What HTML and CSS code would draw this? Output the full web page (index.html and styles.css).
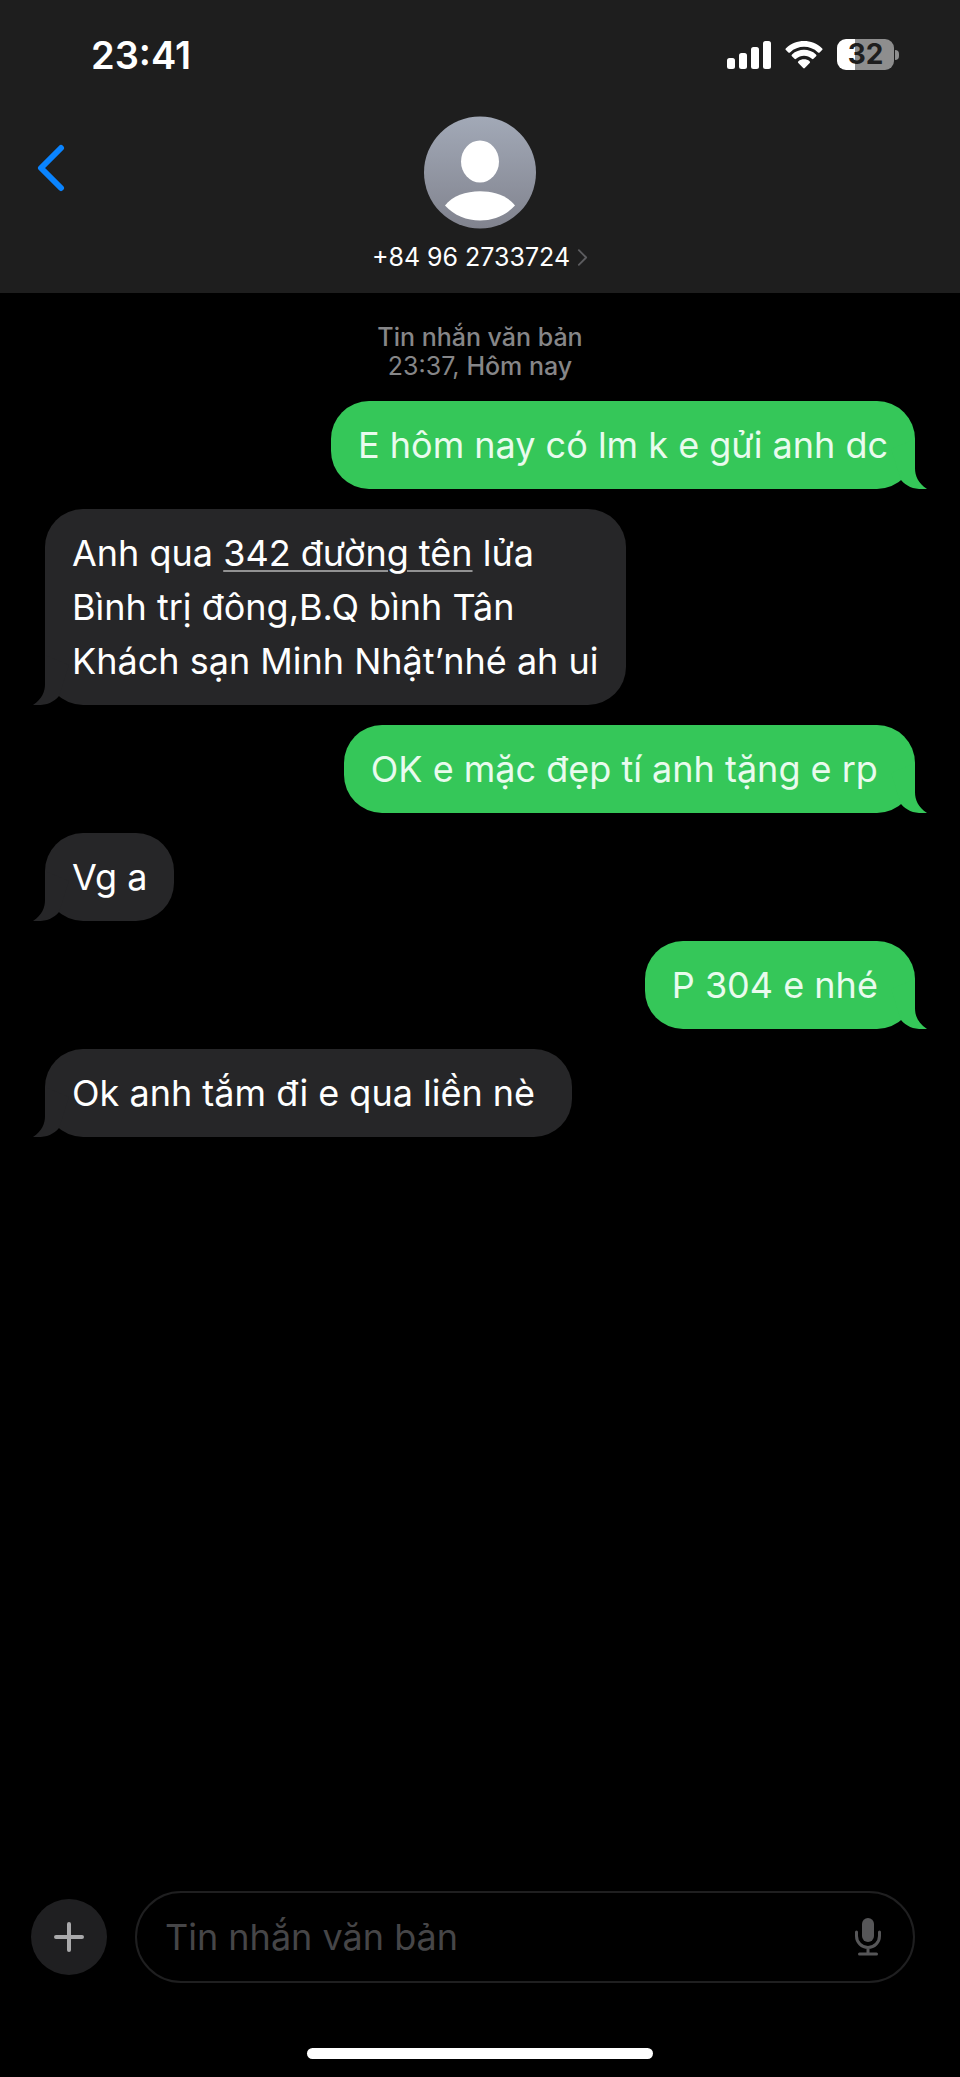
FILE: index.html
```html
<!DOCTYPE html>
<html lang="vi">
<head>
<meta charset="utf-8">
<meta name="viewport" content="width=device-width, initial-scale=1">
<title>+84 96 2733724</title>
<link rel="stylesheet" href="styles.css">
</head>
<body>
<header class="header">
  <div class="status">
    <time class="clock">23:41</time>
    <div class="indicators">
      <svg class="signal" viewBox="0 0 44 28" aria-hidden="true">
        <rect x="0" y="17" width="8" height="11" rx="2.5"/>
        <rect x="12" y="12" width="8" height="16" rx="2.5"/>
        <rect x="24" y="6" width="8" height="22" rx="2.5"/>
        <rect x="36" y="0" width="8" height="28" rx="2.5"/>
      </svg>
      <svg class="wifi" viewBox="0 0 38 28" aria-hidden="true">
        <path d="M1 7.2C11-2.3 27-2.3 37 7.2Q38 8.1 37.1 9L34.6 11.4Q33.8 12.1 33 11.4C25 4 13 4 5 11.4Q4.200 12.100 3.400 11.400L.9 9Q0 8.100 1 7.200Z"/>
        <path d="M7 13.500C13.800 7.300 24.200 7.300 31 13.500Q32 14.400 31.100 15.300L28.500 17.800Q27.700 18.500 26.900 17.800C22.300 13.800 15.700 13.800 11.100 17.800Q10.300 18.500 9.500 17.800L6.900 15.300Q6 14.400 7 13.500Z"/>
        <path d="M13.400 20.200C16.600 17.600 21.400 17.600 24.600 20.200Q25.600 21.100 24.700 22L19.800 27.100Q19 27.800 18.200 27.100L13.300 22Q12.400 21.100 13.400 20.200Z"/>
      </svg>
      <div class="battery"><span class="battery-level">32</span></div>
    </div>
  </div>
  <div class="contact-bar">
    <button class="back" type="button" aria-label="Quay lại">
      <svg viewBox="0 0 28 48" aria-hidden="true"><path d="M24 4 4 24 24 44"/></svg>
    </button>
    <button class="contact" type="button">
      <svg class="avatar" viewBox="0 0 112 112" aria-hidden="true">
        <defs>
          <linearGradient id="avatar-fill" x1="0" y1="0" x2="0" y2="1">
            <stop offset="0" stop-color="#a2a9b7"/>
            <stop offset="1" stop-color="#81838e"/>
          </linearGradient>
        </defs>
        <circle cx="56" cy="56" r="56" fill="url(#avatar-fill)"/>
        <ellipse cx="56" cy="45" rx="19" ry="21" fill="#fff"/>
        <path d="M21 89C35 70 77 70 91 89C73 109 39 109 21 89Z" fill="#fff"/>
      </svg>
      <span class="number">+84 96 2733724
        <svg class="chevron" viewBox="0 0 12 20" aria-hidden="true"><path d="m2 2 8 8-8 8"/></svg>
      </span>
    </button>
  </div>
</header>

<main class="thread">
  <p class="stamp"><strong>Tin nhắn văn bản</strong><br>23:37, <strong>Hôm nay</strong></p>
  <p class="bubble sent">E hôm nay có lm k e gửi anh dc</p>
  <p class="bubble received">Anh qua <a class="address" href="#">342 đường tên</a> lửa<br>Bình trị đông,B.Q bình Tân<br>Khách sạn Minh Nhật’nhé ah ui</p>
  <p class="bubble sent">OK e mặc đẹp tí anh tặng e rp&nbsp;</p>
  <p class="bubble received">Vg a</p>
  <p class="bubble sent">P 304 e nhé&nbsp;</p>
  <p class="bubble received">Ok anh tắm đi e qua liền nè&nbsp;</p>
</main>

<footer class="footer">
  <form class="composer">
    <button class="add" type="button" aria-label="Thêm">
      <svg viewBox="0 0 30 30" aria-hidden="true"><path d="M15 2v26M2 15h26"/></svg>
    </button>
    <div class="field">
      <input class="entry" type="text" placeholder="Tin nhắn văn bản" aria-label="Tin nhắn văn bản">
      <button class="dictate" type="button" aria-label="Đọc chính tả">
        <svg viewBox="0 0 26 38" aria-hidden="true">
          <rect class="mic-head" x="7" y="0" width="12" height="24" rx="6"/>
          <path d="M1.500 14v4a11.500 11.500 0 0 0 23 0v-4M13 30v6M4.500 36h17"/>
        </svg>
      </button>
    </div>
  </form>
  <div class="home-indicator"></div>
</footer>
</body>
</html>
```
FILE: styles.css
```css
* {
  box-sizing: border-box;
}

body {
  margin: 0;
  min-height: 100vh;
  display: flex;
  flex-direction: column;
  background: #000;
  color: #fff;
  font-family: Inter, "Noto Sans", sans-serif;
  font-size: 36px;
}

button {
  margin: 0;
  padding: 0;
  border: 0;
  background: none;
  color: inherit;
  font: inherit;
}

svg {
  display: block;
}

.header {
  background: #1e1e1e;
  padding-bottom: 20px;
}

.status {
  display: flex;
  justify-content: space-between;
  align-items: center;
  height: 109px;
  padding: 0 61px 0 91px;
}

.clock {
  font-size: 38px;
  font-weight: 600;
}

.indicators {
  display: flex;
  align-items: center;
  gap: 14px;
  fill: #fff;
}

.signal {
  width: 44px;
  height: 28px;
}

.wifi {
  width: 38px;
  height: 28px;
}

.battery {
  display: flex;
  align-items: center;
  gap: 1px;
}

.battery::after {
  content: "";
  width: 4px;
  height: 10px;
  border-radius: 0 5px 5px 0;
  background: #8e8e8e;
}

.battery-level {
  width: 57px;
  border-radius: 9px;
  background: linear-gradient(to right, #fff 32%, #8e8e8e 32%);
  color: #1e1e1e;
  font-size: 28px;
  font-weight: 700;
  line-height: 31px;
  text-align: center;
}

.contact-bar {
  display: grid;
  grid-template-columns: 1fr auto 1fr;
  align-items: start;
  padding: 7px 37px 0;
}

.back {
  justify-self: start;
  padding-top: 28px;
}

.back svg {
  width: 28px;
  height: 48px;
  fill: none;
  stroke: #0a84ff;
  stroke-width: 6;
  stroke-linecap: round;
  stroke-linejoin: round;
}

.contact {
  display: flex;
  flex-direction: column;
  align-items: center;
  gap: 12px;
}

.avatar {
  width: 112px;
  height: 113px;
}

.number {
  display: flex;
  align-items: center;
  gap: 7px;
  font-size: 25px;
  line-height: 32px;
}

.chevron {
  width: 11px;
  height: 19px;
  fill: none;
  stroke: #5c5c5f;
  stroke-width: 2;
  stroke-linecap: round;
  stroke-linejoin: round;
}

.thread {
  flex: 1;
  display: flex;
  flex-direction: column;
  gap: 20px;
  padding: 30px 45px;
}

.stamp {
  margin: 0;
  color: #868688;
  font-size: 25px;
  line-height: 29px;
  text-align: center;
}

.stamp strong {
  font-weight: 500;
}

.bubble {
  position: relative;
  max-width: 80%;
  margin: 0;
  padding: 17px 27px;
  border-radius: 38px;
  line-height: 54px;
}

.bubble::after {
  content: "";
  position: absolute;
  bottom: 0;
  width: 40px;
  height: 50px;
  background: inherit;
}

.sent {
  align-self: flex-end;
  background: #35c759;
  color: #e9fbee;
}

.sent::after {
  right: -12px;
  clip-path: path("M28 0V29C28 37 31 44 40 50C28 51 20 48 14 41L4 10Z");
}

.received {
  align-self: flex-start;
  background: #262628;
}

.received::after {
  left: -12px;
  clip-path: path("M12 0V29C12 37 9 44 0 50C12 51 20 48 26 41L36 10Z");
}

.address {
  color: inherit;
  text-decoration: underline;
  text-decoration-color: #929293;
  text-decoration-thickness: 2px;
  text-underline-offset: 4px;
}

.footer {
  padding-bottom: 18px;
}

.composer {
  display: flex;
  align-items: center;
  gap: 28px;
  padding: 0 45px 0 31px;
}

.add {
  display: grid;
  place-items: center;
  width: 76px;
  height: 76px;
  border-radius: 50%;
  background: #1f1f21;
}

.add svg {
  width: 30px;
  height: 30px;
  fill: none;
  stroke: #a9a9ab;
  stroke-width: 4;
  stroke-linecap: round;
}

.field {
  flex: 1;
  display: flex;
  align-items: center;
  height: 92px;
  padding: 0 32px 0 28px;
  border: 2px solid #1f1f20;
  border-radius: 46px;
}

.entry {
  flex: 1;
  min-width: 0;
  padding: 0;
  border: 0;
  outline: 0;
  background: none;
  color: #fff;
  font: inherit;
}

.entry::placeholder {
  color: #464648;
  opacity: 1;
}

.dictate svg {
  width: 26px;
  height: 38px;
  fill: none;
  stroke: #565658;
  stroke-width: 3;
  stroke-linecap: round;
}

.dictate .mic-head {
  fill: #565658;
  stroke: none;
}

.home-indicator {
  width: 36%;
  height: 11px;
  margin: 65px auto 0;
  border-radius: 6px;
  background: #fff;
}
```
